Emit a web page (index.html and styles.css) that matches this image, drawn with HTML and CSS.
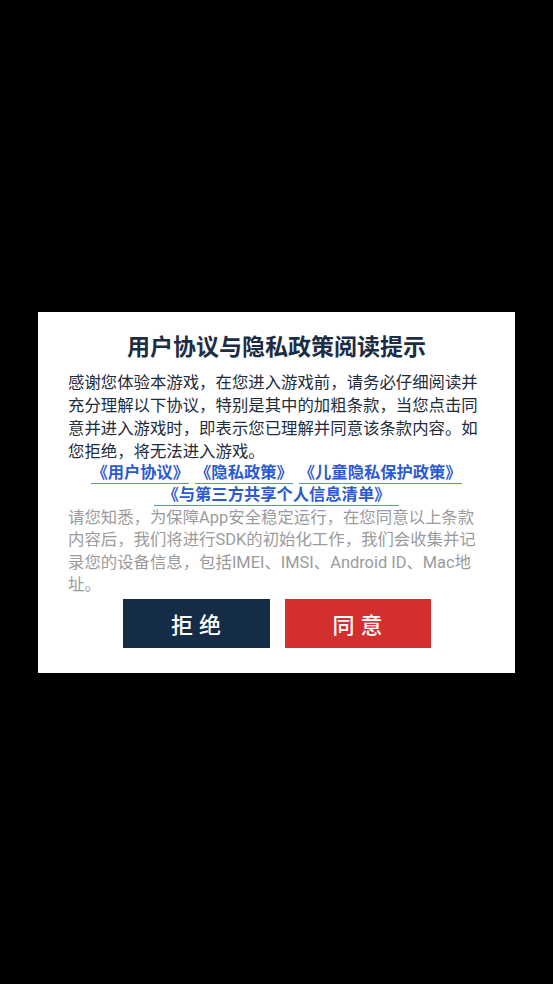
FILE: index.html
```html
<!DOCTYPE html>
<html lang="zh-CN">
<head>
<meta charset="utf-8">
<title>用户协议与隐私政策阅读提示</title>
<link rel="stylesheet" href="styles.css">
</head>
<body>
<div class="screen">
  <div class="dialog">
    <h1 class="title">用户协议与隐私政策阅读提示</h1>
    <p class="intro">感谢您体验本游戏，在您进入游戏前，请务必仔细阅读并充分理解以下协议，特别是其中的加粗条款，当您点击同意并进入游戏时，即表示您已理解并同意该条款内容。如您拒绝，将无法进入游戏。</p>
    <div class="links">
      <div class="link-row">
        <a class="link">《用户协议》</a><a class="link">《隐私政策》</a><a class="link">《儿童隐私保护政策》</a>
      </div>
      <div class="link-row">
        <a class="link link-wide">《与第三方共享个人信息清单》</a>
      </div>
    </div>
    <p class="notice">请您知悉，为保障App安全稳定运行，在您同意以上条款内容后，我们将进行SDK的初始化工作，我们会收集并记录您的设备信息，包括IMEI、IMSI、Android ID、Mac地址。</p>
    <div class="actions">
      <button class="btn btn-refuse">拒绝</button>
      <button class="btn btn-agree">同意</button>
    </div>
  </div>
</div>
</body>
</html>
```

FILE: styles.css
```css
* { box-sizing: border-box; }

html, body {
  margin: 0;
  padding: 0;
  background: #000;
}

body {
  font-family: Roboto, "Noto Sans CJK SC", sans-serif;
}

.screen {
  width: 553px;
  height: 984px;
  display: flex;
  align-items: center;
  justify-content: center;
}

.dialog {
  width: 477px;
  background: #fff;
  padding: 21px 30px 25px 30px;
  display: flex;
  flex-direction: column;
}

.title {
  margin: 0;
  font-size: 23px;
  line-height: 30px;
  font-weight: 700;
  color: #1b2d45;
  text-align: center;
}

.intro {
  margin: 8px 0 0 0;
  font-size: 16.4px;
  line-height: 23px;
  color: #1f2c3b;
}

.links {
  display: flex;
  flex-direction: column;
  align-items: center;
}

.link-row {
  display: flex;
  justify-content: center;
  gap: 6px;
  height: 22px;
}

.link {
  display: inline-block;
  font-size: 16.3px;
  line-height: 20px;
  font-weight: 700;
  color: #2c5ad0;
  border-bottom: 1px solid #5f8be3;
  height: 21px;
}

.link-wide {
  padding: 0 9px;
}

.notice {
  margin: 0;
  font-size: 16.4px;
  line-height: 22.5px;
  color: #9b9b9b;
}

.actions {
  margin-top: 2px;
  display: flex;
  justify-content: center;
  gap: 15px;
}

.btn {
  border: none;
  height: 49px;
  padding: 0 0 0 6px;
  font-family: "Noto Sans CJK SC", sans-serif;
  font-size: 22px;
  letter-spacing: 6px;
  color: #fff;
  font-weight: 500;
}

.btn-refuse {
  width: 147px;
  background: #152c47;
}

.btn-agree {
  width: 146px;
  background: #d32f2f;
}
```
